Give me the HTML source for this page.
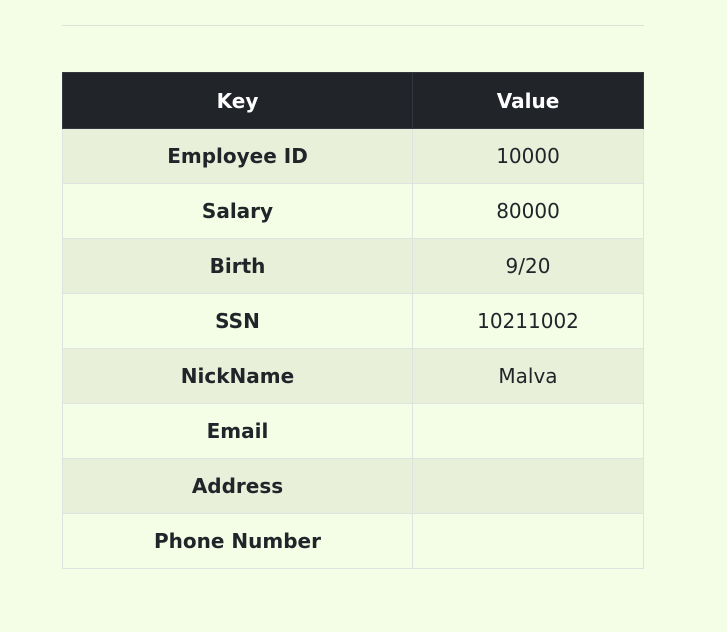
<!DOCTYPE html>
<html><head><style>
body{margin:0;background:#f4fde6;font-family:"DejaVu Sans",sans-serif;width:727px;height:632px;overflow:hidden;}
.hr{position:absolute;left:62px;top:25px;width:582px;height:1px;background:#dee2d8;}
table{position:absolute;left:62px;top:72px;width:582px;border-collapse:collapse;font-size:20px;color:#212529;}
th,td{height:54px;padding:0;text-align:center;border:1px solid #dee2e0;}
td:first-child,th:first-child{width:349px;}
th{background:#212529;color:#fff;font-weight:bold;border-color:#32383e;height:55px;}
td:first-child{font-weight:bold;}
tr:nth-child(odd) td{background:#e9f0da;}
tr:nth-child(even) td{background:#f4fde6;}
</style></head><body>
<div class="hr"></div>
<table>
<thead><tr><th>Key</th><th>Value</th></tr></thead>
<tbody>
<tr><td>Employee ID</td><td>10000</td></tr>
<tr><td>Salary</td><td>80000</td></tr>
<tr><td>Birth</td><td>9/20</td></tr>
<tr><td>SSN</td><td>10211002</td></tr>
<tr><td>NickName</td><td>Malva</td></tr>
<tr><td>Email</td><td></td></tr>
<tr><td>Address</td><td></td></tr>
<tr><td>Phone Number</td><td></td></tr>
</tbody></table>
</body></html>
